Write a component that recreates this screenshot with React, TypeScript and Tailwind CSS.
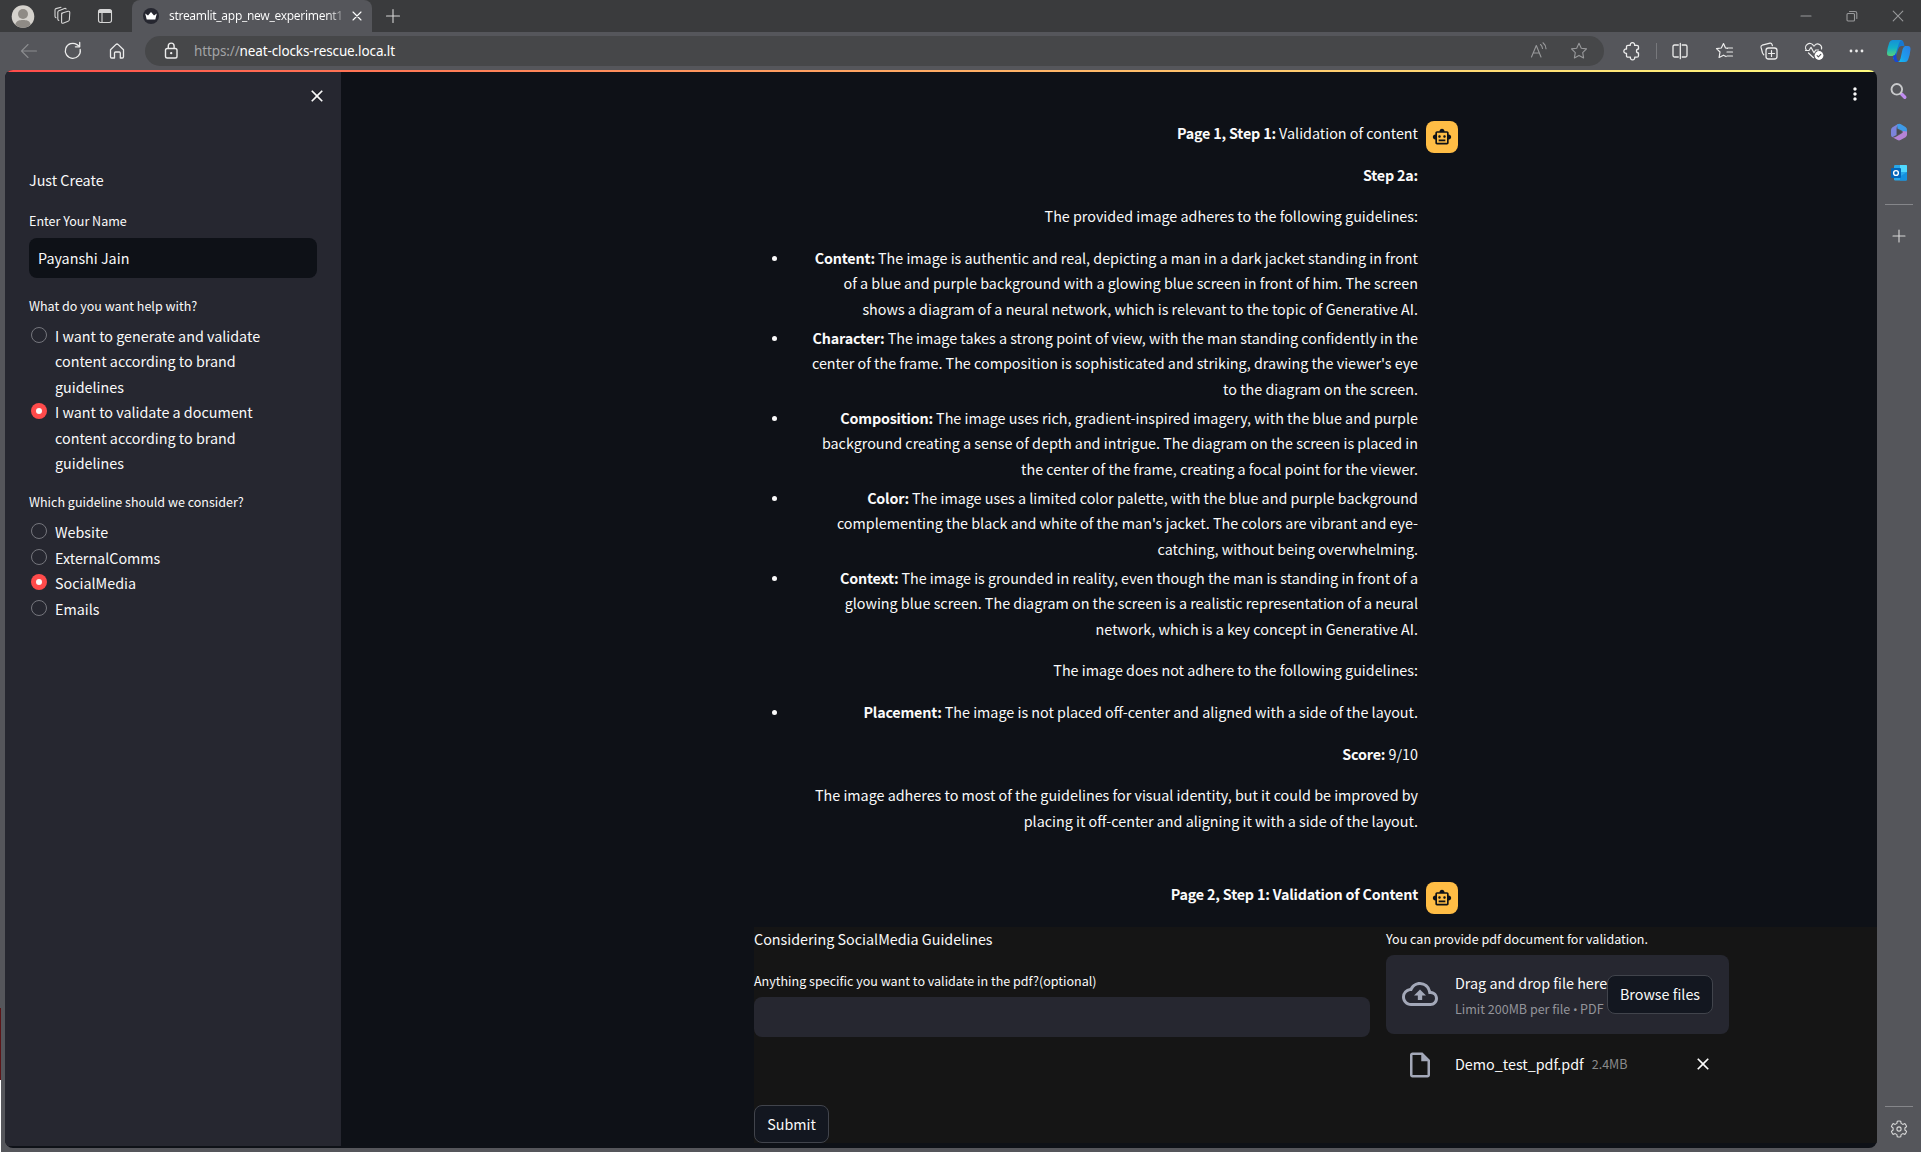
import React from "react";
import {
  MdOutlineSmartToy,
  MdOutlineCloudUpload,
  MdOutlineInsertDriveFile,
  MdClose,
  MdMoreVert,
} from "react-icons/md";

type IconProps = { children: React.ReactNode; className?: string; size?: number };

function Stroke({ children, className = "", size = 20 }: IconProps) {
  return (
    <svg
      width={size}
      height={size}
      viewBox={`0 0 ${size} ${size}`}
      fill="none"
      stroke="currentColor"
      strokeWidth="1.1"
      strokeLinecap="round"
      strokeLinejoin="round"
      className={"block shrink-0 " + className}
    >
      {children}
    </svg>
  );
}

function TabStrip() {
  return (
    <div className="flex h-8 shrink-0 items-stretch bg-[#3a3b3d] text-[#d6d6d6]">
      <div className="flex w-[132px] items-center">
        <svg width="24" height="24" viewBox="0 0 24 24" className="ml-[11px] mt-px block shrink-0">
          <circle cx="12" cy="11.5" r="11.3" fill="#d5d2cd" />
          <circle cx="12" cy="9" r="5" fill="#8f8b86" />
          <path d="M4.2 19.5C5.5 15.5 8.5 15 12 15s6.5.5 7.8 4.5A11.3 11.3 0 0 1 12 22.8a11.3 11.3 0 0 1-7.8-3.3z" fill="#8f8b86" />
        </svg>
        <Stroke className="ml-[18px]">
          <path d="M8.5 7.2 15 5.3q1.6-.4 1.8 1.2l-.5 7.500q-.2 1-1.200 1.300l-5 1.900q-1.500.4-1.500-1.100V8.800q0-1.200.9-1.600z" />
          <path d="M5.800 14.500q-1-.4-1-1.500V6.200q.1-1 1-1.400l5.700-2.300q1-.3 1.600.3" />
          <path d="M3 11.700q-1-.4-1-1.500V4q.1-1 1-1.400L8 1.200" />
        </Stroke>
        <Stroke className="ml-[22px]">
          <rect x="3.5" y="3.5" width="13" height="13" rx="2.2" />
          <path d="M4 6.5V5.5Q4 4 5.5 4h9Q16 4 16 5.5v1z" fill="currentColor" />
          <path d="M7 7v9" />
        </Stroke>
      </div>
      <div className="flex w-60 items-center rounded-t-lg bg-[#55565b]">
        <svg width="16" height="16" viewBox="0 0 16 16" className="ml-[11px] block shrink-0">
          <circle cx="8" cy="8" r="8" fill="#262730" />
          <path d="M2.2 5.5 5 7.5 8 4l3 3.500 2.800-2L12.300 11.500H3.700z" fill="#fff" />
        </svg>
        <span className="ml-[10px] w-[176px] whitespace-nowrap bg-gradient-to-r from-white from-90% to-white/20 bg-clip-text font-['Noto_Sans'] text-xs tracking-[-0.3px] text-transparent">
          streamlit_app_new_experiment1&nbsp;·
        </span>
        <Stroke size={12} className="ml-[6px] text-white">
          <path d="M2 2l8 8M10 2l-8 8" />
        </Stroke>
      </div>
      <div className="flex flex-1 items-center">
        <Stroke size={16} className="ml-[13px]">
          <path d="M8 1.500v13M1.500 8h13" />
        </Stroke>
        <div className="ml-auto mr-[17px] flex items-center gap-[34px] text-[#98999b]">
          <Stroke size={12}><path d="M1 6h10" /></Stroke>
          <Stroke size={12}>
            <rect x="1" y="3.5" width="7.5" height="7.5" rx="1" />
            <path d="M3.500 1.500H9A1.800 1.800 0 0 1 10.800 3.300V8.500" />
          </Stroke>
          <Stroke size={12}><path d="M1.200 1.200l9.600 9.600M10.800 1.200l-9.600 9.600" /></Stroke>
        </div>
      </div>
    </div>
  );
}

function Toolbar() {
  return (
    <div className="flex h-[38px] shrink-0 items-center bg-[#55565b] text-[#ececec]">
      <div className="flex w-[145px] items-center pl-[19px]">
        <Stroke className="text-[#8b8c8f]"><path d="M17.500 10H2.500M9 3.500 2.500 10 9 16.500" /></Stroke>
        <Stroke className="ml-[24px]">
          <path d="M17.200 8.500A7.500 7.500 0 1 1 14 3.600l2.400 1.700" strokeWidth="1.3" />
          <path d="M16.700 1.500v4.300h-4.300" strokeWidth="1.3" />
        </Stroke>
        <Stroke className="ml-[24px]">
          <path d="M3.500 8.800 9 3.400q1-.9 2 0l5.500 5.400v7q0 1.200-1.200 1.200h-2V12q0-1-1-1H8.500q-1 0-1 1v5h-2.800q-1.200 0-1.200-1.200z" strokeWidth="1.3" />
        </Stroke>
      </div>
      <div className="flex h-[30px] w-[1459px] items-center rounded-full bg-[#464749] font-['Noto_Sans']">
        <Stroke className="ml-4">
          <rect x="4.5" y="7.5" width="11.5" height="9.5" rx="1.8" strokeWidth="1.4" />
          <path d="M7.300 7.300V5a2.900 2.900 0 0 1 5.800 0v2.300" strokeWidth="1.4" />
          <circle cx="10.2" cy="12.2" r=".6" fill="currentColor" />
        </Stroke>
        <span className="ml-[13px] whitespace-nowrap text-[13.5px] tracking-[-0.12px] text-white">
          <span className="text-[#a3a4a6]">https://</span>neat-clocks-rescue.loca.lt
        </span>
        <Stroke className="ml-auto text-[#98999b]">
          <path d="M2.500 16 7.300 4.500 12 16M4.200 12h6.200M11.500 3.500q1.800 1.500 2 4M14 1.800q2.800 2.200 3 6" />
        </Stroke>
        <Stroke className="ml-5 mr-[15px] text-[#98999b]">
          <path d="M10 2.300l2.300 4.900 5.200.7-3.800 3.700.9 5.300L10 14.400l-4.600 2.500.9-5.300-3.800-3.700 5.200-.7z" />
        </Stroke>
      </div>
      <Stroke className="ml-[18px]">
        <path d="M6 4.300h2.300a2.200 2.200 0 1 1 4.300 0H15q1.500 0 1.500 1.500V8a2 2 0 1 0 0 4v2.700q0 1.500-1.500 1.500h-2.300a2.200 2.200 0 1 1-4.300 0H6q-1.500 0-1.500-1.500v-2.400a2.200 2.200 0 1 1 0-4.300V5.800Q4.500 4.300 6 4.300z" strokeWidth="1.3" />
      </Stroke>
      <div className="ml-[14px] h-4 w-px bg-[#77787c]" />
      <Stroke className="ml-[13px]">
        <path d="M8.300 4H4.500Q3 4 3 5.500v9Q3 16 4.500 16h3.800M12.200 4h3.300Q17 4 17 5.500v9q0 1.500-1.500 1.500h-3.300M10.300 2.300v15.400" strokeWidth="1.3" />
      </Stroke>
      <Stroke className="ml-[25px]">
        <path d="M12.500 7.300 10.500 7 8.500 2.500 6.300 7 1.500 7.600 5 11l-.9 5.500 4.400-2.300 2.500 1.300M11.500 7H17.500M12 11h5.500M12 15h5.500" strokeWidth="1.2" />
      </Stroke>
      <Stroke className="ml-6">
        <rect x="7" y="7" width="11" height="11" rx="2.5" strokeWidth="1.3" />
        <path d="M12.500 9.500v6M9.500 12.500h6M4.800 13.800 3.500 12 2 6.200Q1.700 4.700 3.200 4.200L11 2.200q1.500-.3 2 1.200l.4 1.300" strokeWidth="1.2" />
      </Stroke>
      <Stroke className="ml-[25px]">
        <path d="M2.300 9A4 4 0 0 1 9.300 4.300L10 5l.7-.7A4 4 0 0 1 17.500 8M4.500 12l5 4.700M1.500 9.500H5L7 6.300l3 5.500 1.700-2.800h2.800" strokeWidth="1.2" />
        <circle cx="15" cy="14.5" r="4.4" fill="#fff" stroke="none" />
        <path d="m13.100 14.700 1.300 1.200 2.400-2.500" stroke="#55565b" strokeWidth="1.1" />
      </Stroke>
      <Stroke className="ml-[22px]">
        <g fill="currentColor" stroke="none">
          <circle cx="5" cy="10" r="1.4" /><circle cx="10.5" cy="10" r="1.4" /><circle cx="16" cy="10" r="1.4" />
        </g>
      </Stroke>
      <svg width="26" height="24" viewBox="0 0 26 24" className="ml-[20px] block shrink-0">
        <defs>
          <linearGradient id="copA" x1="0" y1="0" x2="0" y2="1">
            <stop offset="0" stopColor="#1690d8" /><stop offset=".5" stopColor="#12b0c8" /><stop offset="1" stopColor="#58d27a" />
          </linearGradient>
          <linearGradient id="copB" x1="1" y1="0" x2="0" y2="1">
            <stop offset="0" stopColor="#2b7de4" /><stop offset=".6" stopColor="#1d9bee" /><stop offset="1" stopColor="#12c0f0" />
          </linearGradient>
        </defs>
        <path d="M12.500 1h3q1.800.3 2.300 3l.7 3h-3.500q-2 .5-2.700 3l-3 9q-1 2.500-2.500.500z" fill="#1778d2" />
        <path d="M6.500 1h9q-1.800.7-2.600 3.500l-3 9.500q-.8 2.800-3.400 3H3.800Q.7 17 1 13.500q.5-5 2.300-10Q4.200 1 6.500 1z" fill="url(#copA)" />
        <path d="M7 17q2.300-.3 3-3l.5 4.500q.5 3 2.500 4.500H10q-1.700-.3-2.100-2.500z" fill="#1747d6" />
        <path d="M17 7h5q2.800.2 2.500 3.500-.5 5-2.300 10-.9 2.500-3.200 2.500h-7q1.800-.7 2.500-3.500l2-9q.5-2.500 2.500-3z" fill="url(#copB)" />
      </svg>
    </div>
  );
}

function EdgeSidebar() {
  return (
    <div className="flex w-11 shrink-0 flex-col items-center bg-[#55565b] text-[#d8d8d8]">
      <svg width="20" height="20" viewBox="0 0 20 20" className="mt-[11px] block">
        <path d="m12.800 13.300 3 3" stroke="#c08cf0" strokeWidth="3.4" strokeLinecap="round" />
        <circle cx="7.8" cy="8.3" r="5.3" stroke="#c9cacc" strokeWidth="1.9" fill="none" />
      </svg>
      <svg width="18" height="18" viewBox="0 0 18 18" className="mt-[22px] block">
        <path d="M8 1 2.500 4.200Q1 5.200 1 7v5q0 1.500 1.300 2.300L6.500 12V6q0-2.500 2.500-4.500z" fill="#7d84dc" />
        <path d="M7.500 1.200Q9 .3 10.500 1.100l5 2.800Q17 5 17 7v3.500L12.500 8 7.500 5.500q-.5-2.500 0-4.300z" fill="#3f9be8" />
        <path d="M17 8.500v3.300q0 1.500-1.500 2.400l-5 2.900q-1.500.8-3 0l-5-2.800q2 .3 3.500-.6l5.500-3.200Q13.500 9.500 12.500 8z" fill="#b583d6" />
        <path d="M7 6.200 12 9 7 12z" fill="#4a4b50" />
      </svg>
      <svg width="18" height="18" viewBox="0 0 18 18" className="mt-[23px] block">
        <rect x="4" y="1" width="13" height="15.5" rx="1.2" fill="#28a8ea" />
        <path d="M10 1h6q1 0 1 1v6h-7z" fill="#50d9ff" />
        <path d="m17 8-7 4.500v4h6q1 0 1-1z" fill="#1490df" />
        <rect x="1" y="4" width="10" height="10" rx="1" fill="#0364b8" />
        <circle cx="6" cy="9" r="2.4" stroke="#fff" strokeWidth="1.4" fill="none" />
      </svg>
      <div className="mt-[22px] h-px w-7 bg-[#85868a]" />
      <Stroke size={16} className="mt-[23px]"><path d="M8 2v12M2 8h12" /></Stroke>
      <div className="mt-auto h-px w-7 bg-[#85868a]" />
      <Stroke className="mb-[13px] mt-3">
        <path d="M8.300 2.200q1.700-.4 3.400 0l.4 2.200 1.700 1 2.100-.8q1.200 1.300 1.700 3L15.900 9v2l1.700 1.400q-.5 1.700-1.700 3l-2.100-.8-1.700 1-.4 2.200q-1.700.4-3.400 0l-.4-2.200-1.700-1-2.100.8q-1.200-1.300-1.700-3L4.100 11V9L2.400 7.600q.5-1.700 1.700-3l2.100.8 1.700-1z" />
        <circle cx="10" cy="10" r="2.1" />
      </Stroke>
    </div>
  );
}

function Radio({ lines, checked = false }: { lines: string[]; checked?: boolean }) {
  return (
    <div className="flex">
      <span
        className={
          checked
            ? "ml-0.5 mt-1 flex size-4 shrink-0 items-center justify-center rounded-full bg-[#ff4b4b]"
            : "ml-0.5 mt-1 size-4 shrink-0 rounded-full border border-[#75767d]"
        }
      >
        {checked && <span className="size-1.5 rounded-full bg-[#fafafa]" />}
      </span>
      <div className="ml-2 whitespace-nowrap leading-[25.4px]">
        {lines.map((l) => <div key={l}>{l}</div>)}
      </div>
    </div>
  );
}

function AppSidebar() {
  return (
    <aside className="mb-0.5 flex w-[336px] shrink-0 flex-col bg-[#262730] px-6 text-[14.33px] text-[#fafafa]">
      <div className="-mr-[10px] flex h-5 justify-end pt-[14px]">
        <MdClose size={20} className="shrink-0" />
      </div>
      <div className="mt-[76px] h-6 leading-6">Just Create</div>
      <div className="mt-[19px] h-5 text-[12.54px] leading-5">Enter Your Name</div>
      <div className="mt-[7px] flex h-10 items-center rounded-lg bg-[#0e1117] px-[9px]">Payanshi Jain</div>
      <div className="mt-[18px] h-5 text-[12.54px] leading-5">What do you want help with?</div>
      <div className="mt-[7px]">
        <Radio lines={["I want to generate and validate", "content according to brand", "guidelines"]} />
        <Radio checked lines={["I want to validate a document", "content according to brand", "guidelines"]} />
      </div>
      <div className="mt-[17px] h-5 text-[12.54px] leading-5">Which guideline should we consider?</div>
      <div className="mt-[7px]">
        <Radio lines={["Website"]} />
        <Radio lines={["ExternalComms"]} />
        <Radio checked lines={["SocialMedia"]} />
        <Radio lines={["Emails"]} />
      </div>
    </aside>
  );
}

function Avatar() {
  return (
    <div className="ml-2 mt-px flex size-8 shrink-0 items-center justify-center rounded-lg bg-[#ffbd45] text-[#0e1117]">
      <MdOutlineSmartToy size={20} />
    </div>
  );
}

function Strong({ children }: { children: React.ReactNode }) {
  return <b className="tracking-[-0.19px]">{children}</b>;
}

const adheres: { term: string; lines: string[] }[] = [
  {
    term: "Content:",
    lines: [
      "The image is authentic and real, depicting a man in a dark jacket standing in front",
      "of a blue and purple background with a glowing blue screen in front of him. The screen",
      "shows a diagram of a neural network, which is relevant to the topic of Generative AI.",
    ],
  },
  {
    term: "Character:",
    lines: [
      "The image takes a strong point of view, with the man standing confidently in the",
      "center of the frame. The composition is sophisticated and striking, drawing the viewer's eye",
      "to the diagram on the screen.",
    ],
  },
  {
    term: "Composition:",
    lines: [
      "The image uses rich, gradient-inspired imagery, with the blue and purple",
      "background creating a sense of depth and intrigue. The diagram on the screen is placed in",
      "the center of the frame, creating a focal point for the viewer.",
    ],
  },
  {
    term: "Color:",
    lines: [
      "The image uses a limited color palette, with the blue and purple background",
      "complementing the black and white of the man's jacket. The colors are vibrant and eye-",
      "catching, without being overwhelming.",
    ],
  },
  {
    term: "Context:",
    lines: [
      "The image is grounded in reality, even though the man is standing in front of a",
      "glowing blue screen. The diagram on the screen is a realistic representation of a neural",
      "network, which is a key concept in Generative AI.",
    ],
  },
];

function Item({ term, lines }: { term: string; lines: string[] }) {
  return (
    <li className="flex">
      <span className="mt-[11px] size-[5px] shrink-0 rounded-full bg-[#fafafa]" />
      <div className="flex-1">
        {lines.map((l, i) => (
          <div key={l}>
            {i === 0 && <Strong>{term} </Strong>}
            {l}
          </div>
        ))}
      </div>
    </li>
  );
}

function Chat() {
  return (
    <div className="flex h-[855px] shrink-0 flex-col gap-12 overflow-hidden pl-[431px] pt-12 text-right text-[14.33px] leading-[25.6px]">
      <div className="flex w-[686px]">
        <div className="flex flex-1 flex-col gap-4 whitespace-nowrap">
          <p><Strong>Page 1, Step 1:</Strong> Validation of content</p>
          <p><Strong>Step 2a:</Strong></p>
          <p>The provided image adheres to the following guidelines:</p>
          <ul className="flex flex-col gap-[3.2px]">
            {adheres.map((a) => <Item key={a.term} {...a} />)}
          </ul>
          <p>The image does not adhere to the following guidelines:</p>
          <ul>
            <Item term="Placement:" lines={["The image is not placed off-center and aligned with a side of the layout."]} />
          </ul>
          <p><Strong>Score:</Strong> 9/10</p>
          <p>
            The image adheres to most of the guidelines for visual identity, but it could be improved by
            <br />
            placing it off-center and aligning it with a side of the layout.
          </p>
        </div>
        <Avatar />
      </div>
      <div className="flex w-[686px]">
        <p className="flex-1"><Strong>Page 2, Step 1: Validation of Content</Strong></p>
        <Avatar />
      </div>
    </div>
  );
}

function BottomPanel() {
  return (
    <div className="ml-[413px] flex h-[216px] bg-[#151515] text-[14.33px]">
      <div className="flex w-[616px] flex-col items-start">
        <div className="h-6 leading-6">Considering SocialMedia Guidelines</div>
        <div className="mt-5 h-5 text-[12.54px] leading-5">Anything specific you want to validate in the pdf?(optional)</div>
        <div className="mt-[6px] h-10 w-full rounded-lg bg-[#262730]" />
        <div className="mt-auto flex h-[38px] w-[75px] items-center justify-center rounded-lg border border-[#41444c] bg-[#131720] pb-px">Submit</div>
      </div>
      <div className="ml-4 w-[343px] whitespace-nowrap">
        <div className="mt-[2px] h-5 text-[12.54px] leading-5">You can provide pdf document for validation.</div>
        <div className="mt-[6px] flex h-[79px] items-center rounded-lg bg-[#262730] px-4">
          <MdOutlineCloudUpload size={36} className="mb-px shrink-0 text-[#a3a8b8]" />
          <div className="ml-[17px] w-[152px]">
            <div className="h-6 leading-6">Drag and drop file here</div>
            <div className="h-6 pt-0.5 text-[12.54px] leading-6 text-[#93949a]">
              Limit 200MB per file <span className="font-['Noto_Sans'] text-[11px]">•</span> PDF
            </div>
          </div>
          <div className="flex h-[39px] w-[106px] shrink-0 items-center justify-center rounded-lg border border-[#41444c] bg-[#131720] pb-px">Browse files</div>
        </div>
        <div className="mt-[15px] flex h-[30px] items-center pl-[19px] pr-4">
          <MdOutlineInsertDriveFile size={30} className="mt-0.5 shrink-0 text-[#a3a8b8]" />
          <span className="ml-5">Demo_test_pdf.pdf</span>
          <span className="ml-2 text-[12.54px] text-[#8a8a8b]">2.4MB</span>
          <MdClose size={20} className="ml-auto" />
        </div>
      </div>
    </div>
  );
}

export default function App() {
  return (
    <div className="flex h-[1152px] w-[1921px] flex-col overflow-hidden bg-[#55565b] font-['Noto_Sans_CJK_SC',sans-serif]">
      <TabStrip />
      <Toolbar />
      <div className="flex min-h-0 flex-1">
        <div className="flex w-[5px] shrink-0 flex-col">
          <div className="mt-[938px] h-[72px] w-px bg-[#5c1518]" />
          <div className="w-px flex-1 bg-white" />
        </div>
        <div className="mb-1 flex w-[1872px] flex-col overflow-hidden rounded-lg bg-[#0e1117]">
          <div className="h-0.5 shrink-0 bg-gradient-to-r from-[#ff4b4b] to-[#fffd80]" />
          <div className="flex min-h-0 flex-1">
            <AppSidebar />
            <main className="relative min-w-0 flex-1 text-[#fafafa]">
              <MdMoreVert size={20} className="absolute right-3 top-3" />
              <Chat />
              <BottomPanel />
            </main>
          </div>
        </div>
        <EdgeSidebar />
      </div>
    </div>
  );
}
